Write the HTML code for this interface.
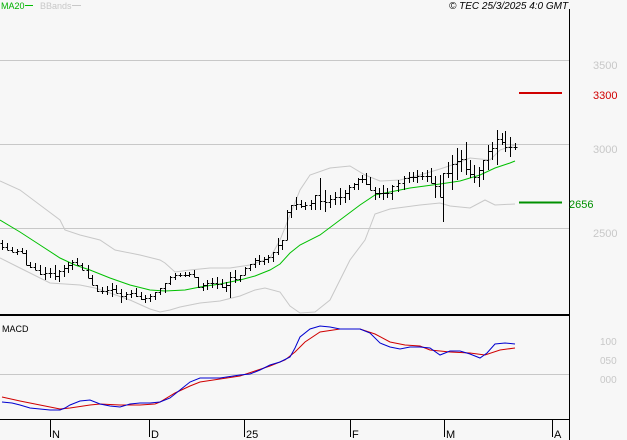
<!DOCTYPE html>
<html><head><meta charset="utf-8"><style>
html,body{margin:0;padding:0;background:#f7f7f7;width:627px;height:440px;overflow:hidden}
svg{display:block}
text{font-family:"Liberation Sans",sans-serif}
</style></head><body>
<svg id="c" width="627" height="440" xmlns="http://www.w3.org/2000/svg">
<rect width="627" height="440" fill="#f7f7f7"/>
<g stroke="#c8c8c8" stroke-width="1">
<line x1="0" y1="60.5" x2="569" y2="60.5"/>
<line x1="0" y1="144.5" x2="569" y2="144.5"/>
<line x1="0" y1="228.5" x2="569" y2="228.5"/>
<line x1="0" y1="374.5" x2="569" y2="374.5"/>
</g>
<g fill="none" stroke="#c8c8c8" stroke-width="1">
<polyline points="0,181 20,190 40,205 60,220 65,230 80,235 100,240 115,250 140,255 160,260 165,263 175,272 190,270 210,268 230,268 250,265 270,258 280,240 290,215 300,190 310,175 330,168 350,166 365,175 380,181 400,180 420,175 440,169 455,164 470,158 490,160 500,150 515,145"/>
<polyline points="0,258 20,268 50,283 80,285 95,288 110,293 130,300 150,309 160,312 170,310 180,307 200,303 220,301 240,296 255,290 265,288 280,292 290,306 300,313 315,312 330,300 340,280 350,260 365,240 375,214 390,209 420,205 440,203 450,206 470,208 485,200 495,205 515,204"/>
</g>
<polyline fill="none" stroke="#00c000" stroke-width="1" points="0,220 20,232 40,245 60,258 75,265 90,270 110,278 130,285 150,290 165,291 185,290 200,287 220,284 240,280 255,276 270,270 280,264 290,253 300,245 320,235 340,220 360,205 375,195 390,192 410,188 440,184 460,181 480,175 495,168 510,163 515,161"/>
<g id="bars" stroke="#000" stroke-width="1" fill="none"></g>
<line x1="519" y1="93" x2="562" y2="93" stroke="#d00000" stroke-width="2"/>
<line x1="519" y1="202.5" x2="562" y2="202.5" stroke="#009000" stroke-width="2"/>
<line x1="0" y1="315" x2="569" y2="315" stroke="#000" stroke-width="2"/>
<line x1="0" y1="419.5" x2="569" y2="419.5" stroke="#000" stroke-width="1"/>
<line x1="569.5" y1="9" x2="569.5" y2="440" stroke="#000" stroke-width="1"/>
<polyline fill="none" stroke="#d00000" stroke-width="1" points="2,397 20,401 40,405 60,409 70,408 90,405 100,404 120,405 140,405 155,404 160,402 175,393 190,386 200,382 220,379 240,376 255,371 270,366 285,360 295,352 305,342 320,332 340,329 360,329 375,334 390,342 405,345 420,346 430,350 450,352 470,353 485,355 500,350 515,348"/>
<polyline fill="none" stroke="#0000d0" stroke-width="1" points="2,402 12,403 20,405 30,408 40,409 50,410 60,410 65,408 70,405 80,401 90,400 100,404 110,406 120,407 130,404 140,403 150,403 160,402 170,398 180,390 190,382 200,378 220,378 240,375 250,374 260,370 270,365 280,362 290,357 295,348 300,337 310,329 320,326 330,327 340,329 350,329 360,329 370,333 380,343 390,347 400,349 410,347 420,347 430,348 440,355 450,351 460,351 470,354 480,358 487,353 495,344 505,343 515,344"/>
<g stroke="#000" stroke-width="1">
<line x1="50.5" y1="420" x2="50.5" y2="437"/><line x1="149.5" y1="420" x2="149.5" y2="437"/><line x1="244.5" y1="420" x2="244.5" y2="437"/><line x1="350.5" y1="420" x2="350.5" y2="437"/><line x1="444.5" y1="420" x2="444.5" y2="437"/><line x1="552.5" y1="420" x2="552.5" y2="437"/>
</g>
<g font-size="11" fill="#000">
<text x="52" y="438">N</text><text x="151" y="438">D</text><text x="246" y="438">25</text><text x="352" y="438">F</text><text x="446" y="438">M</text><text x="554" y="438">A</text>
</g>
<text x="2" y="332" font-size="9" fill="#000">MACD</text>
<text x="1" y="9" font-size="9" fill="#00b000">MA20</text>
<line x1="25" y1="5.5" x2="33" y2="5.5" stroke="#00c000"/>
<text x="40" y="9" font-size="9" fill="#c8c8c8">BBands</text>
<line x1="72" y1="5.5" x2="81" y2="5.5" stroke="#c8c8c8"/>
<text x="449" y="9" font-size="10" font-style="italic" fill="#000">© TEC 25/3/2025 4:0 GMT</text>
<g font-size="11" fill="#c8c8c8">
<text x="593" y="69">3500</text><text x="593" y="153">3000</text><text x="593" y="237">2500</text>
<text x="600" y="345" font-size="10">100</text><text x="600" y="364" font-size="10">050</text><text x="600" y="383" font-size="10">000</text>
</g>
<text x="593" y="99" font-size="11" fill="#d00000">3300</text>
<text x="569" y="208" font-size="11" fill="#009000">2656</text>
</svg>
<script>
var b=[[2,240,250],[7,243,250],[12,247,252],[17,249,255],[22,248,253],[26,250,265],[30,262,268],[35,263,270],[40,265,275],[45,267,280],[50,268,278],[55,265,280],[59,270,282],[64,265,277],[68,262,273],[72,260,270],[77,258,265],[82,263,270],[88,265,278],[92,275,285],[97,285,292],[102,287,294],[107,286,295],[112,283,297],[116,285,293],[121,289,303],[126,292,300],[131,290,298],[136,288,297],[141,292,300],[145,295,303],[150,294,302],[155,292,300],[160,288,295],[165,283,293],[170,276,285],[175,273,280],[180,273,277],[185,272,277],[189,272,277],[194,270,277],[198,277,288],[203,283,291],[207,280,290],[212,278,288],[217,277,289],[222,279,288],[226,282,292],[230,272,298],[235,270,283],[240,275,282],[245,267,275],[250,264,271],[255,258,268],[259,255,265],[264,257,265],[268,255,263],[273,252,262],[278,238,255],[282,240,250],[287,210,240],[291,205,218],[296,197,210],[301,200,208],[305,202,210],[311,200,210],[315,195,210],[320,178,210],[325,190,212],[330,195,208],[335,192,205],[340,188,205],[345,190,203],[349,185,200],[354,183,190],[358,178,190],[362,175,183],[366,173,185],[370,177,190],[375,187,200],[379,188,198],[383,185,200],[387,188,198],[392,185,200],[398,180,192],[404,176,190],[409,172,183],[413,172,182],[417,170,183],[422,172,180],[427,170,182],[431,168,183],[435,176,198],[440,175,197],[443,173,222],[448,162,178],[452,155,190],[457,148,180],[461,150,172],[466,142,175],[470,160,178],[474,165,183],[479,167,187],[483,160,180],[488,145,170],[492,142,160],[497,130,165],[502,133,145],[505,131,152],[510,137,157],[515,143,150]];
var g=document.getElementById('bars'),s='',p=null;
for(var i=0;i<b.length;i++){var x=b[i][0]+0.5,h=b[i][1],l=b[i][2];var o=p?Math.max(h,Math.min(l,p)):h+(l-h)/3;var c=(i+1<b.length)?Math.max(h,Math.min(l,(b[i+1][1]+b[i+1][2])/2)):h+(l-h)/2;
s+='<line x1="'+x+'" y1="'+h+'" x2="'+x+'" y2="'+l+'"/><line x1="'+(x-2)+'" y1="'+(Math.round(o)+.5)+'" x2="'+x+'" y2="'+(Math.round(o)+.5)+'"/><line x1="'+x+'" y1="'+(Math.round(c)+.5)+'" x2="'+(x+2)+'" y2="'+(Math.round(c)+.5)+'"/>';p=c;}
g.innerHTML=s;
</script>
</body></html>
